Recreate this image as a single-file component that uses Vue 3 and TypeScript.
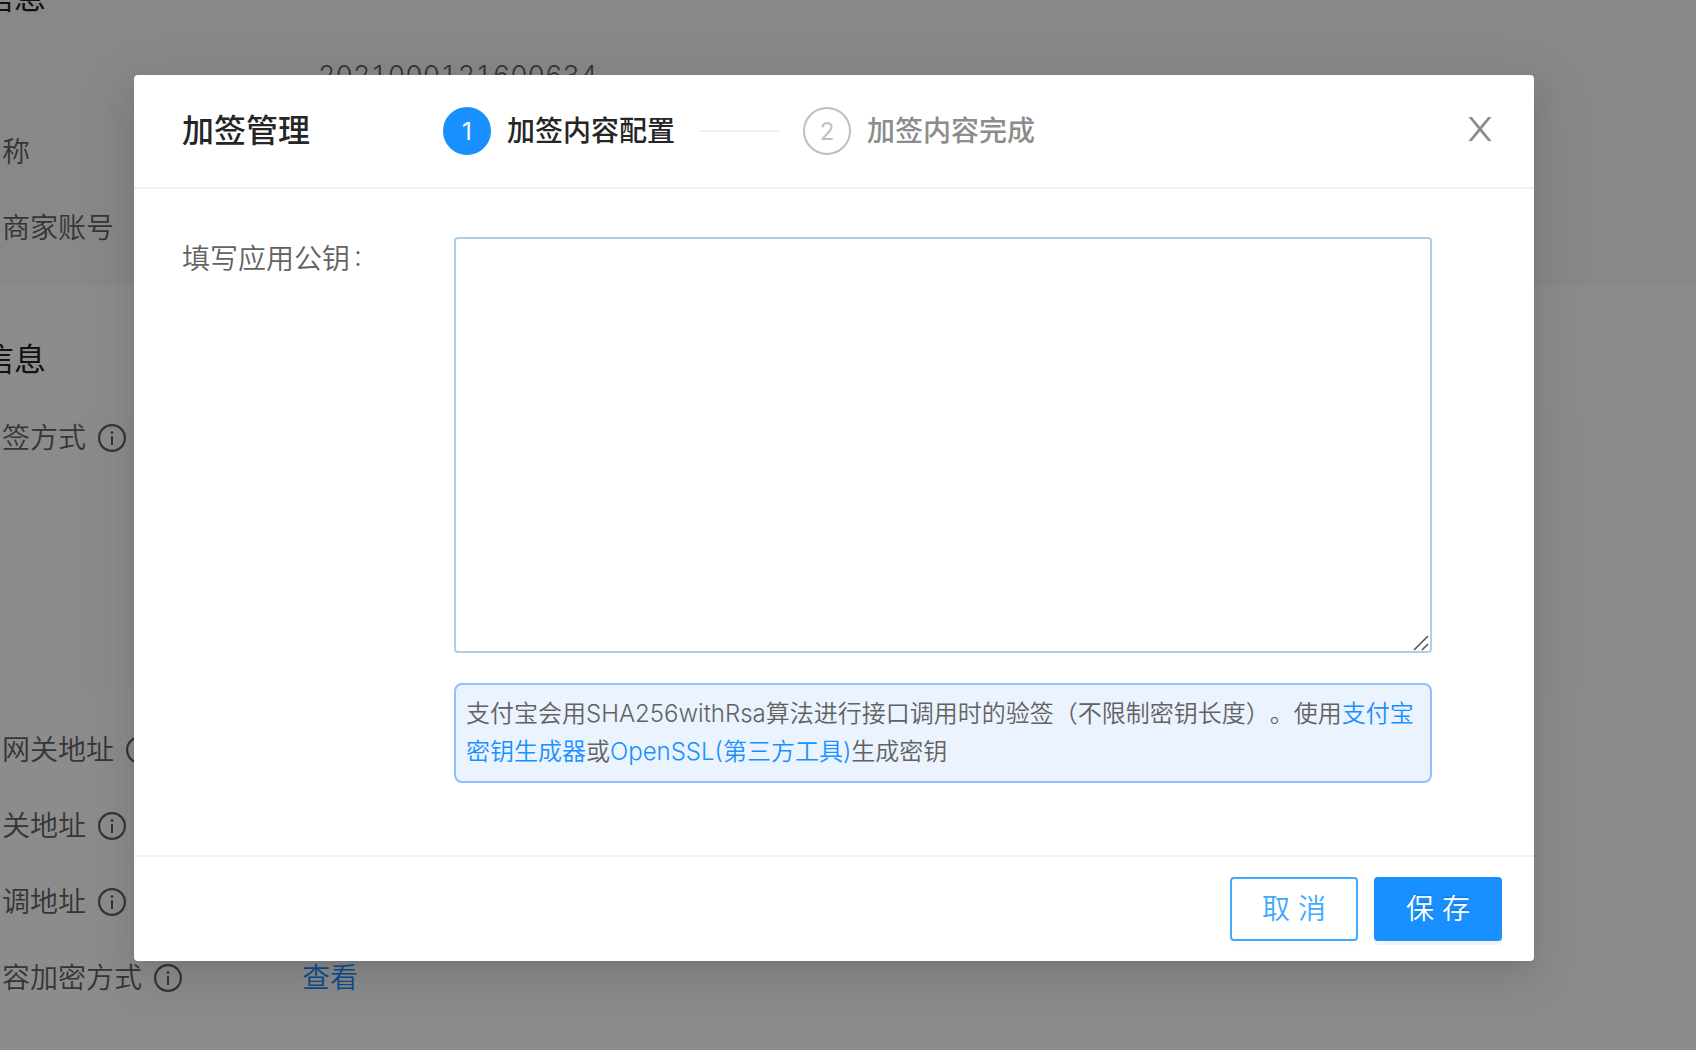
<script setup lang="ts">
import { ref } from 'vue'

interface InfoRow {
  label: string
  hint?: boolean
  value?: string
  link?: string
  tall?: boolean
}

interface Section {
  title: string
  rows: InfoRow[]
}

const sections: Section[] = [
  {
    title: '信息',
    rows: [
      { label: '', value: '2021000121600634' },
      { label: '称' },
      { label: '商家账号\u00a0', hint: true },
    ],
  },
  {
    title: '信息',
    rows: [
      { label: '签方式', hint: true, tall: true },
      { label: '网关地址', hint: true },
      { label: '关地址', hint: true },
      { label: '调地址', hint: true },
      { label: '容加密方式', hint: true, link: '查看' },
    ],
  },
]

const steps = ['加签内容配置', '加签内容完成']
const current = ref(0)
const publicKey = ref('')
</script>

<template>
  <div class="page">
    <main class="backdrop">
      <section v-for="(section, s) in sections" :key="s" class="section">
        <h2 class="section-title">{{ section.title }}</h2>
        <div v-for="(row, r) in section.rows" :key="r" class="row" :class="{ tall: row.tall }">
          <span class="row-label">
            {{ row.label }}
            <svg v-if="row.hint" class="hint" viewBox="0 0 28 28" aria-hidden="true">
              <circle cx="14" cy="14" r="12.9" fill="none" stroke="currentColor" stroke-width="2.2" />
              <circle cx="14" cy="8.6" r="1.4" fill="currentColor" />
              <path d="M14 12v9" stroke="currentColor" stroke-width="2" />
            </svg>
          </span>
          <span v-if="row.value" class="row-value">{{ row.value }}</span>
          <a v-if="row.link" href="#" class="link">{{ row.link }}</a>
        </div>
      </section>
    </main>

    <div class="mask">
      <div class="modal" role="dialog" aria-modal="true" aria-labelledby="modal-title">
        <header class="modal-header">
          <h1 id="modal-title" class="modal-title">加签管理</h1>
          <ol class="steps">
            <li v-for="(step, i) in steps" :key="step" class="step" :class="{ active: i === current }">
              <span class="step-icon">{{ i + 1 }}</span>
              <span class="step-title">{{ step }}</span>
            </li>
          </ol>
          <button type="button" class="close" aria-label="关闭">
            <svg viewBox="0 0 24 24" aria-hidden="true">
              <path d="M0.5 0H3.9L12 9.8L20.1 0H23.5L13.8 12L23.5 24H20.1L12 14.2L3.9 24H0.5L10.2 12Z" fill="currentColor" />
            </svg>
          </button>
        </header>

        <div class="modal-body">
          <label for="public-key" class="field-label">填写应用公钥<span class="colon">:</span></label>
          <div class="field">
            <div class="key-box">
              <textarea id="public-key" v-model="publicKey" class="key-input"></textarea>
              <svg class="grip" viewBox="0 0 16 16" aria-hidden="true">
                <path d="M1 15L15 1M9 15L15 9" stroke="#555" stroke-width="1.6" fill="none" />
              </svg>
            </div>
            <p class="notice">
              支付宝会用SHA256withRsa算法进行接口调用时的验签（不限制密钥长度）。使用<a href="#">支付宝密钥生成器</a>或<a href="#">OpenSSL(第三方工具)</a>生成密钥
            </p>
          </div>
        </div>

        <footer class="modal-footer">
          <button type="button" class="btn">取 消</button>
          <button type="button" class="btn primary">保 存</button>
        </footer>
      </div>
    </div>
  </div>
</template>

<style>
body {
  margin: 0;
  overflow: hidden;
}
</style>

<style scoped>
.page {
  position: relative;
  height: 100vh;
  overflow: hidden;
  background: #fff;
  color: #626262;
  font-family: Inter, "Noto Sans CJK SC", sans-serif;
  font-size: 28px;
  font-weight: 350;
  line-height: 40px;
  text-spacing-trim: space-all;
}

.section {
  display: flow-root;
}

.section:first-child {
  height: 286px;
  background: #f7f7f7;
}

.section-title {
  margin: 54px 0 20px -18px;
  font-size: 32px;
  font-weight: 400;
  line-height: 40px;
  color: #222;
}

.section:first-child .section-title {
  margin-top: -22px;
}

.row {
  display: flex;
  align-items: center;
  height: 76px;
  padding-left: 2px;
}

.row.tall {
  box-sizing: border-box;
  align-items: flex-start;
  height: 312px;
  padding: 14px 0 22px;
  background: #fbfefd content-box;
}

.row.tall .row-label {
  height: 48px;
  padding-left: 2px;
}

.row-label {
  display: flex;
  flex: none;
  align-items: center;
  gap: 12px;
  width: 300px;
}

.row-value {
  padding-left: 16px;
  font-size: 27px;
  font-weight: 300;
  font-variant-numeric: tabular-nums;
}

.hint {
  flex: none;
  width: 28px;
  height: 28px;
}

a {
  color: #1890ff;
  text-decoration: none;
}

.mask {
  position: absolute;
  inset: 0;
  padding: 75px 162px 0 134px;
  background: rgba(0, 0, 0, 0.45);
}

.modal {
  border-radius: 4px;
  background: #fff;
  box-shadow:
    0 6px 12px -8px rgba(0, 0, 0, 0.12),
    0 12px 32px rgba(0, 0, 0, 0.08),
    0 18px 56px 16px rgba(0, 0, 0, 0.05);
}

.modal-header {
  display: flex;
  align-items: center;
  height: 112px;
  padding: 0 40px 0 48px;
  border-bottom: 2px solid #f0f0f0;
}

.modal-title {
  width: 261px;
  margin: 0;
  font-size: 32px;
  font-weight: 500;
  line-height: 40px;
  color: #262626;
}

.steps {
  display: flex;
  flex: 1;
  margin: 0;
  padding: 0;
  list-style: none;
}

.step {
  display: flex;
  align-items: center;
  gap: 16px;
  color: #8c8c8c;
  font-weight: 500;
}

.step.active {
  color: #262626;
}

.step:not(:last-child)::after {
  width: 80px;
  height: 2px;
  margin: 0 24px 0 8px;
  background: #f0f0f0;
  content: "";
}

.step-icon {
  box-sizing: border-box;
  width: 48px;
  height: 48px;
  border: 2px solid #bfbfbf;
  border-radius: 50%;
  color: #bfbfbf;
  font-size: 24px;
  font-weight: 400;
  line-height: 46px;
  text-align: center;
}

.step.active .step-icon {
  border-color: #1890ff;
  background: #1890ff;
  color: #fff;
}

.close {
  display: flex;
  padding: 0 0 4px;
  border: 0;
  background: none;
  color: #8c8c8c;
}

.close svg {
  width: 28px;
  height: 24px;
}

.modal-body {
  display: flex;
  padding: 48px 102px 72px 48px;
}

.field-label {
  flex: none;
  width: 272px;
  line-height: 44px;
}

.colon {
  margin-left: 4px;
  font-feature-settings: "case";
}

.field {
  flex: 1;
}

.key-box {
  position: relative;
  display: flex;
}

.key-input {
  box-sizing: border-box;
  width: 100%;
  height: 416px;
  padding: 8px 20px;
  border: 2px solid #afcfe8;
  border-radius: 4px;
  outline: none;
  background: #fff;
  color: #262626;
  font: inherit;
  resize: none;
}

.grip {
  position: absolute;
  right: 3px;
  bottom: 2px;
  width: 16px;
  height: 16px;
}

.notice {
  margin: 30px 0 0;
  padding: 10px;
  border: 2px solid #91bfff;
  border-radius: 8px;
  background: #ebf3ff;
  font-size: 24px;
  line-height: 38px;
}

.modal-footer {
  display: flex;
  justify-content: flex-end;
  gap: 16px;
  padding: 20px 32px;
  border-top: 2px solid #f0f0f0;
}

.btn {
  width: 128px;
  height: 64px;
  padding: 0;
  border: 2px solid #40a9ff;
  border-radius: 4px;
  background: #fff;
  box-shadow: 0 4px 0 rgba(0, 0, 0, 0.016);
  color: #40a9ff;
  font: inherit;
}

.btn.primary {
  border-color: #1890ff;
  background: #1890ff;
  box-shadow: 0 4px 0 rgba(0, 0, 0, 0.045);
  color: #fff;
  text-shadow: 0 -2px 0 rgba(0, 0, 0, 0.12);
}
</style>
